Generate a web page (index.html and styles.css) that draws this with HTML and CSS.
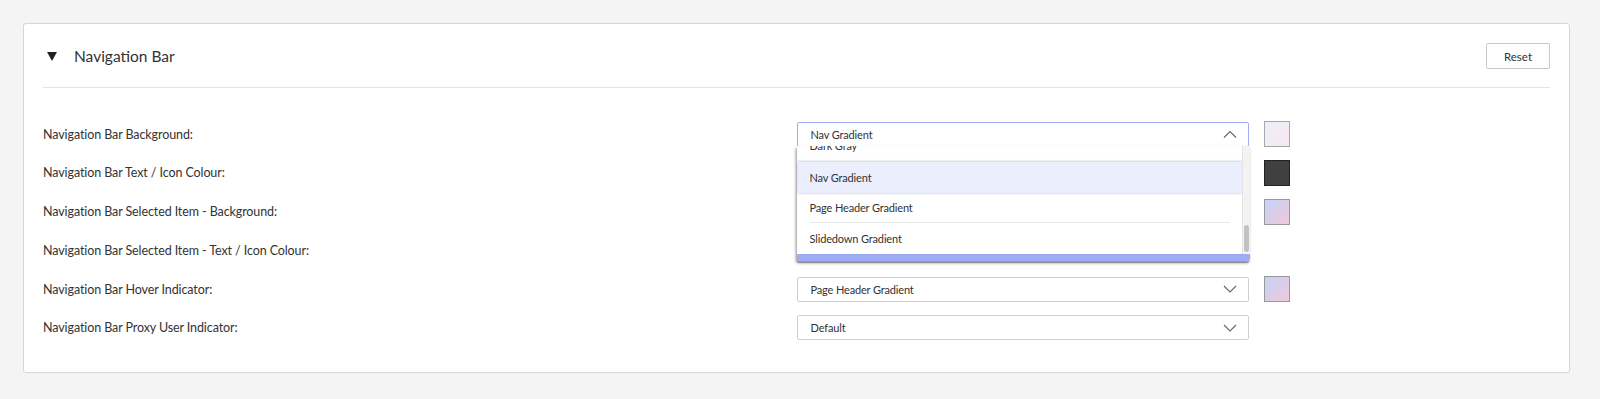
FILE: index.html
```html
<!DOCTYPE html>
<html>
<head>
<meta charset="utf-8">
<link rel="stylesheet" href="styles.css">
</head>
<body>
<section class="card">
  <header class="card-head">
    <div class="title-wrap">
      <span class="caret"></span>
      <h2 class="title">Navigation Bar</h2>
    </div>
    <button class="btn-reset">Reset</button>
  </header>
  <div class="rows">
    <div class="row">
      <label class="lbl">Navigation Bar Background:</label>
      <div class="select-wrap">
        <div class="select open">
          <span>Nav Gradient</span>
          <svg class="chev" width="14" height="8" viewBox="0 0 14 8"><path d="M1 7.5 L7 1.5 L13 7.5" fill="none" stroke="#666" stroke-width="1.1"/></svg>
        </div>
        <div class="dropdown">
          <div class="dd-main">
            <div class="dd-view">
              <ul class="dd-list">
                <li class="dd-item">Dark Gray</li>
                <li class="dd-item active">Nav Gradient</li>
                <li class="dd-item sep">Page Header Gradient</li>
                <li class="dd-item">Slidedown Gradient</li>
              </ul>
            </div>
            <div class="dd-scroll"><div class="dd-thumb"></div></div>
          </div>
          <div class="dd-next"></div>
        </div>
      </div>
      <span class="swatch sw-nav"></span>
    </div>
    <div class="row">
      <label class="lbl">Navigation Bar Text / Icon Colour:</label>
      <div class="select-wrap"><div class="select"></div></div>
      <span class="swatch sw-dark"></span>
    </div>
    <div class="row">
      <label class="lbl">Navigation Bar Selected Item - Background:</label>
      <div class="select-wrap"><div class="select"></div></div>
      <span class="swatch sw-page"></span>
    </div>
    <div class="row">
      <label class="lbl">Navigation Bar Selected Item - Text / Icon Colour:</label>
      <div class="select-wrap"><div class="select"></div></div>
      <span class="swatch-empty"></span>
    </div>
    <div class="row">
      <label class="lbl">Navigation Bar Hover Indicator:</label>
      <div class="select-wrap">
        <div class="select">
          <span>Page Header Gradient</span>
          <svg class="chev" width="14" height="8" viewBox="0 0 14 8"><path d="M1 1 L7 7 L13 1" fill="none" stroke="#666" stroke-width="1.1"/></svg>
        </div>
      </div>
      <span class="swatch sw-page"></span>
    </div>
    <div class="row">
      <label class="lbl">Navigation Bar Proxy User Indicator:</label>
      <div class="select-wrap">
        <div class="select">
          <span>Default</span>
          <svg class="chev" width="14" height="8" viewBox="0 0 14 8"><path d="M1 1 L7 7 L13 1" fill="none" stroke="#666" stroke-width="1.1"/></svg>
        </div>
      </div>
      <span class="swatch-empty"></span>
    </div>
  </div>
</section>
</body>
</html>
```
FILE: styles.css
```css
* { box-sizing: border-box; }
html, body { margin: 0; }
body {
  background: #f4f4f4;
  padding: 23px 30px 27px 23px;
  font-family: "Source Sans Pro", Lato, "Open Sans", sans-serif;
  color: #333;
}
.card {
  background: #fff;
  border: 1px solid #d6d6d6;
  border-radius: 3px;
  padding: 19px 19px 32px 19px;
}
.card-head {
  display: flex;
  justify-content: space-between;
  align-items: center;
  height: 26px;
}
.title-wrap { display: flex; align-items: center; }
.caret {
  width: 0; height: 0;
  border-left: 5.5px solid transparent;
  border-right: 5.5px solid transparent;
  border-top: 9px solid #222;
  margin-left: 4px;
  margin-right: 17px;
  margin-top: 1px;
}
.title {
  margin: 0;
  font-size: 15.5px;
  font-weight: 400;
  color: #333;
}
.btn-reset {
  width: 64px; height: 26px;
  background: #fff;
  border: 1px solid #c9c9c9;
  border-radius: 2px;
  font-family: inherit;
  font-size: 11.5px;
  color: #333;
  padding: 0;
}
.rows {
  border-top: 1px solid #e4e4e4;
  margin-top: 18px;
  padding-top: 33px;
  display: flex;
  flex-direction: column;
  gap: 13.8px;
}
.row {
  display: grid;
  grid-template-columns: 50% 30% 41px;
  align-items: center;
  height: 25px;
}
.lbl { font-size: 12.5px; letter-spacing: -0.1px; color: #333; }
.select-wrap { position: relative; height: 25px; }
.row:nth-child(1) .select-wrap { z-index: 5; }
.select {
  height: 25px;
  border: 1px solid #cfcfcf;
  border-radius: 2px;
  background: #fff;
  display: flex;
  align-items: center;
  justify-content: space-between;
  padding: 0 11px 0 13px;
  font-size: 11px;
  letter-spacing: -0.15px;
  color: #333;
}
.select.open { border-color: #a3adf3; }
.chev { display: block; }
.dropdown {
  position: absolute;
  left: 0; right: -1px;
  top: 24px;
  background: #fff;
  box-shadow: -1px 2px 3px rgba(0,0,0,0.45);
  border-radius: 0 0 2px 2px;
  overflow: hidden;
}
.dd-main { display: flex; height: 108px; }
.dd-view { flex: 1; overflow: hidden; padding-left: 1px; }
.dd-list {
  list-style: none;
  margin: -15px 0 0 0;
  padding: 0;
}
.dd-item {
  height: 30.5px;
  display: flex;
  align-items: center;
  padding-left: 12px;
  font-size: 11px;
  letter-spacing: -0.15px;
  color: #333;
  position: relative;
}
.dd-item.active {
  background: #ebeefc;
  box-shadow: 0 -1px 2px rgba(0,0,0,0.18), 0 1px 2px rgba(0,0,0,0.12);
  margin-top: 1px;
}
.dd-item.sep::after {
  content: "";
  position: absolute;
  left: 12px; right: 12px; bottom: 0;
  border-bottom: 1px solid #e6e6e6;
}
.dd-scroll {
  width: 8px;
  background: #f3f3f3;
  border-left: 1px solid #e3e3e3;
  position: relative;
}
.dd-scroll .dd-thumb {
  position: absolute;
  left: 1px; right: 1px;
  bottom: 2px;
  height: 27px;
  background: #c1c1c1;
  border-radius: 3px;
}
.dd-next { height: 7px; background: #9eacf6; }
.swatch {
  width: 26px; height: 26px;
  border: 1px solid #9a9a9a;
  display: block;
  margin-left: 15px;
}
.sw-nav { background: linear-gradient(135deg, #edf0fb 0%, #f9e6ec 100%); border-color: #a7a7a7; }
.sw-dark { background: #404040; border-color: #222; }
.sw-page { background: linear-gradient(135deg, #c6d2f9 0%, #f0c8d8 100%); border-color: #999; }
.swatch-empty { width: 26px; height: 26px; margin-left: 15px; }
```
